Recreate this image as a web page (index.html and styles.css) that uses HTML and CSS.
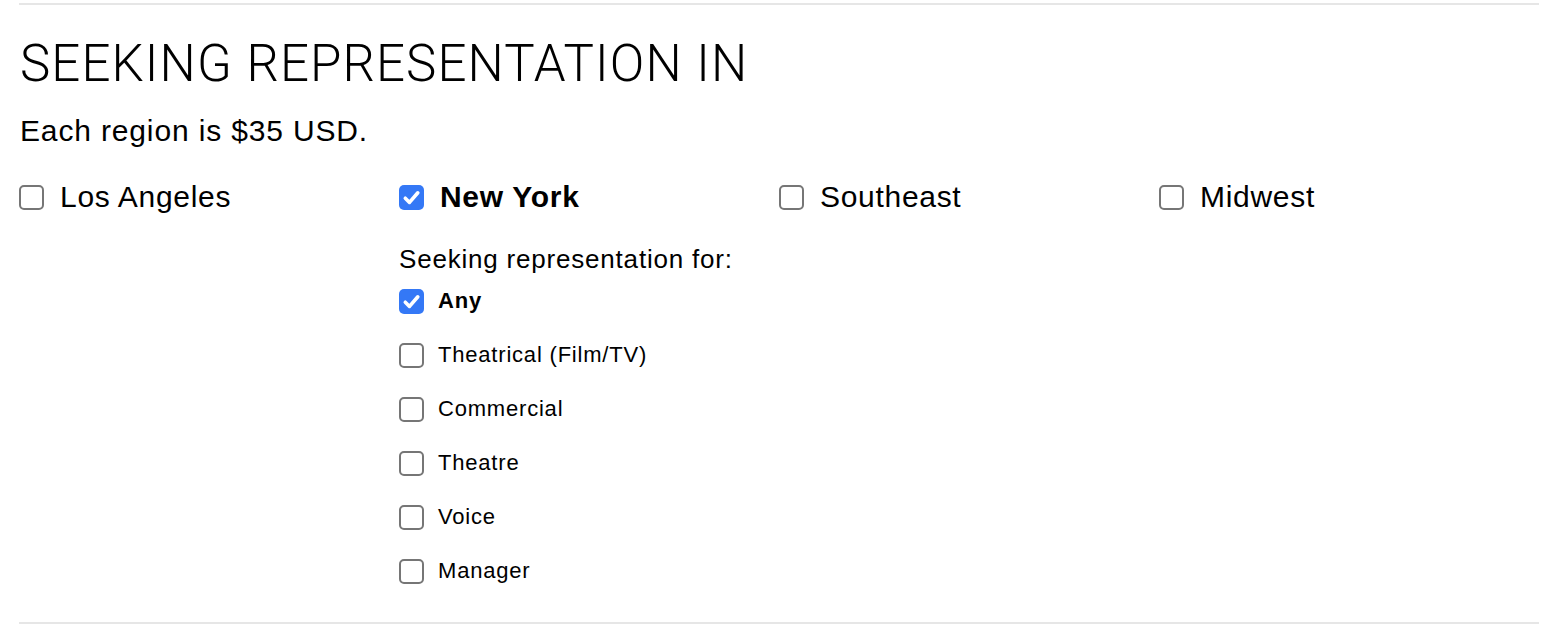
FILE: index.html
```html
<!DOCTYPE html>
<html lang="en">
<head>
<meta charset="utf-8">
<title>Seeking Representation</title>
<link rel="stylesheet" href="styles.css">
</head>
<body>
<div class="section">
  <hr class="rule">
  <h2 class="title">SEEKING REPRESENTATION IN</h2>
  <p class="note">Each region is $35 USD.</p>
  <div class="regions">
    <div class="region">
      <label class="opt"><span class="box"></span><span class="opt-label">Los Angeles</span></label>
    </div>
    <div class="region">
      <label class="opt is-checked"><span class="box checked"><svg viewBox="0 0 25 25" class="tick"><path d="M6.3 13.2 L10.5 17.4 L18.8 7.8"/></svg></span><span class="opt-label">New York</span></label>
      <div class="sub">
        <p class="sub-title">Seeking representation for:</p>
        <ul class="sub-list">
          <li class="sub-opt is-checked"><span class="box checked"><svg viewBox="0 0 25 25" class="tick"><path d="M6.3 13.2 L10.5 17.4 L18.8 7.8"/></svg></span><span class="sub-label">Any</span></li>
          <li class="sub-opt"><span class="box"></span><span class="sub-label">Theatrical (Film/TV)</span></li>
          <li class="sub-opt"><span class="box"></span><span class="sub-label">Commercial</span></li>
          <li class="sub-opt"><span class="box"></span><span class="sub-label">Theatre</span></li>
          <li class="sub-opt"><span class="box"></span><span class="sub-label">Voice</span></li>
          <li class="sub-opt"><span class="box"></span><span class="sub-label">Manager</span></li>
        </ul>
      </div>
    </div>
    <div class="region">
      <label class="opt"><span class="box"></span><span class="opt-label">Southeast</span></label>
    </div>
    <div class="region">
      <label class="opt"><span class="box"></span><span class="opt-label">Midwest</span></label>
    </div>
  </div>
  <hr class="rule rule-bottom">
</div>
</body>
</html>
```
FILE: styles.css
```css
* { box-sizing: border-box; }
html, body { margin: 0; padding: 0; background: #fff; }
body {
  font-family: "Liberation Sans", Arial, Helvetica, sans-serif;
  color: #000;
}
.section {
  padding: 0 17px 0 19px;
}
.rule {
  margin: 3px 0 0 0;
  border: 0;
  height: 2px;
  background: #e6e6e6;
}
.rule-bottom { margin-top: 24px; }
.title {
  margin: 29px 0 0 1px;
  font-family: Roboto, "Liberation Sans", sans-serif;
  font-weight: 300;
  font-size: 51px;
  line-height: 60px;
  letter-spacing: 1.1px;
  color: #000;
}
.note {
  margin: 19px 0 0 1px;
  font-size: 30px;
  line-height: 36px;
  letter-spacing: 0.85px;
}
.regions {
  margin-top: 30px;
  display: grid;
  grid-template-columns: repeat(4, 1fr);
}
.opt {
  display: flex;
  align-items: center;
  gap: 16px;
  height: 36px;
  font-size: 30px;
  letter-spacing: 0.7px;
}
.opt.is-checked .opt-label { font-weight: 700; }
.box {
  flex: none;
  width: 25px;
  height: 25px;
  border: 2px solid #767676;
  border-radius: 5px;
  background: #fff;
  display: flex;
  align-items: center;
  justify-content: center;
}
.box.checked {
  border: 0;
  background: #3478f6;
}
.tick {
  width: 25px;
  height: 25px;
  display: block;
}
.tick path {
  fill: none;
  stroke: #fff;
  stroke-width: 3.6;
  stroke-linecap: round;
  stroke-linejoin: round;
}
.sub { margin-top: 29px; }
.sub-title {
  margin: 0;
  font-size: 26px;
  line-height: 30px;
  letter-spacing: 0.8px;
}
.sub-list {
  list-style: none;
  margin: 0;
  padding: 0;
}
.sub-opt {
  display: flex;
  align-items: center;
  gap: 14px;
  height: 54px;
  font-size: 22px;
  letter-spacing: 0.8px;
}
.sub-opt.is-checked .sub-label { font-weight: 700; }
```
